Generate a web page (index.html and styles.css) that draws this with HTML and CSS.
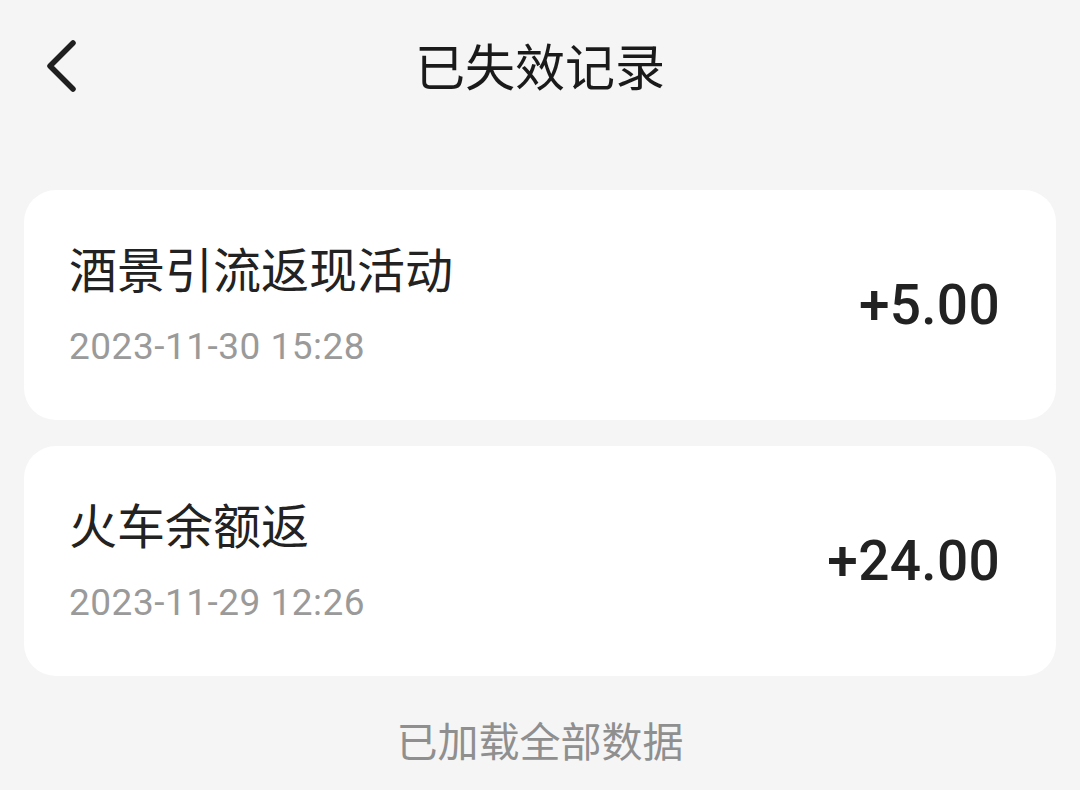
FILE: index.html
```html
<!DOCTYPE html>
<html lang="zh-CN">
<head>
<meta charset="utf-8">
<title>已失效记录</title>
<link rel="stylesheet" href="styles.css">
</head>
<body>
<div class="page">
  <header class="header">
    <div class="header-left">
      <svg class="back" width="36" height="60" viewBox="0 0 36 60" aria-hidden="true">
        <polyline points="26,5 3,28 26,51" fill="none" stroke="#1f1f1f" stroke-width="5.5" stroke-linecap="round" stroke-linejoin="round"/>
      </svg>
    </div>
    <h1 class="title">已失效记录</h1>
    <div class="header-right"></div>
  </header>

  <main class="list">
    <div class="card">
      <div class="info">
        <div class="name">酒景引流返现活动</div>
        <div class="date">2023-11-30 15:28</div>
      </div>
      <div class="amount">+5.00</div>
    </div>
    <div class="card">
      <div class="info">
        <div class="name">火车余额返</div>
        <div class="date">2023-11-29 12:26</div>
      </div>
      <div class="amount">+24.00</div>
    </div>
  </main>

  <footer class="footer">已加载全部数据</footer>
</div>
</body>
</html>
```

FILE: styles.css
```css
html, body {
  margin: 0;
  padding: 0;
  background: #f5f5f5;
}

body {
  font-family: Roboto, "Noto Sans CJK SC", "Noto Sans", sans-serif;
  color: #1f1f1f;
}

.page {
  width: 1080px;
  height: 790px;
  overflow: hidden;
}

.header {
  height: 140px;
  display: grid;
  grid-template-columns: 1fr auto 1fr;
  align-items: center;
}

.header-left {
  padding-left: 47px;
  display: flex;
  align-items: center;
  padding-bottom: 4px;
}

.back {
  display: block;
}

.title {
  margin: 0;
  font-size: 50px;
  font-weight: 400;
  line-height: 60px;
  color: #1a1a1a;
  padding-bottom: 2px;
}

.list {
  padding: 50px 24px 0;
  display: flex;
  flex-direction: column;
  gap: 26px;
}

.card {
  height: 230px;
  background: #ffffff;
  border-radius: 32px;
  display: flex;
  justify-content: space-between;
  align-items: center;
  padding: 0 56px 0 45px;
  box-sizing: border-box;
}

.info {
  display: flex;
  flex-direction: column;
  align-self: flex-start;
  padding-top: 52px;
}

.name {
  font-size: 48px;
  line-height: 60px;
  color: #222222;
}

.date {
  margin-top: 21px;
  font-size: 37px;
  line-height: 48px;
  color: #9a9a9a;
  letter-spacing: 0.5px;
}

.amount {
  font-size: 55px;
  font-weight: 500;
  color: #222222;
  line-height: 64px;
  letter-spacing: 0.3px;
}

.footer {
  margin-top: 42px;
  text-align: center;
  font-size: 41px;
  line-height: 50px;
  color: #8f8f8f;
}
```
